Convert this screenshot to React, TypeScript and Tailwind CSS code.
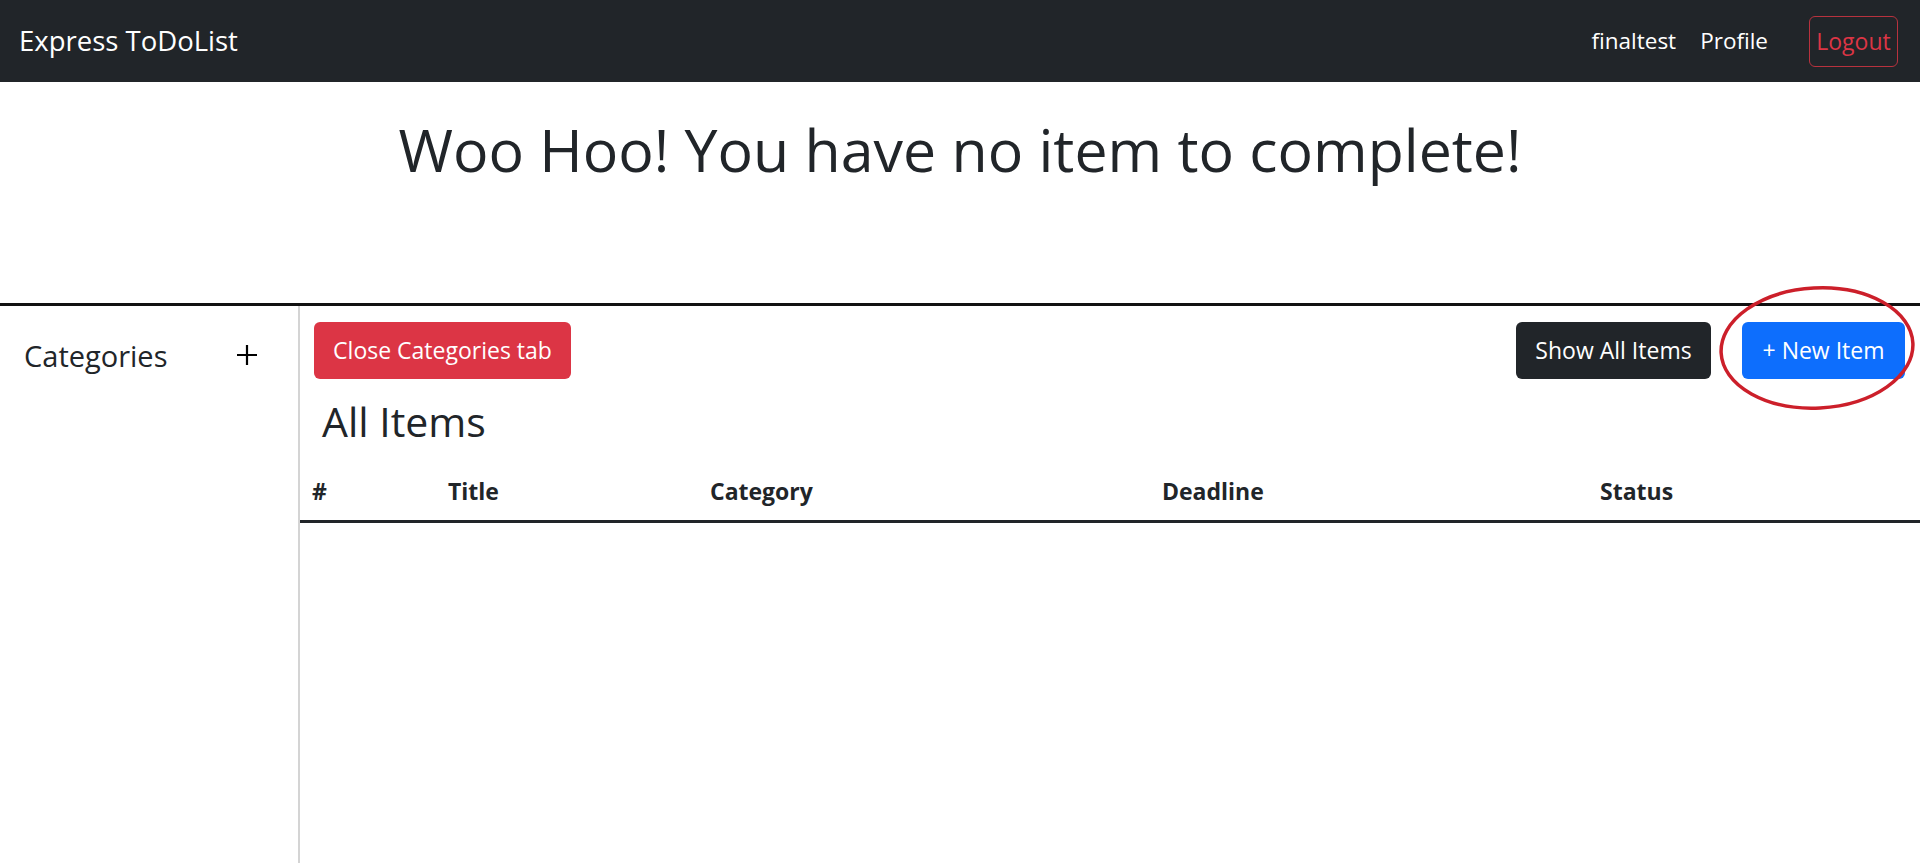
import React from "react";

const columns = [
  { label: "#", width: "w-[136px]" },
  { label: "Title", width: "w-[262px]" },
  { label: "Category", width: "w-[452px]" },
  { label: "Deadline", width: "w-[438px]" },
  { label: "Status", width: "" },
];

function Navbar() {
  return (
    <nav className="flex h-[82px] items-center justify-between bg-[#212529] pl-[19px] pr-[22px]">
      <a className="text-[27.5px] leading-none text-white">Express ToDoList</a>
      <div className="flex items-center">
        <a className="px-3 text-[22.5px] text-white">finaltest</a>
        <a className="px-3 text-[22.5px] text-white">Profile</a>
        <button className="ml-[29px] flex h-[51px] w-[89px] items-center justify-center rounded-[6px] border border-[#b8323e] text-[23px] text-[#dc3545]">
          Logout
        </button>
      </div>
    </nav>
  );
}

function Sidebar() {
  return (
    <aside className="w-[300px] shrink-0 border-r-2 border-[#d4d4d4]">
      <div className="mt-[20px] flex h-[58px] items-center justify-between pl-[24px] pr-[40px]">
        <h5 className="text-[29px] leading-none">Categories</h5>
        <svg width="22" height="22" viewBox="0 0 22 22" className="text-black">
          <path d="M11 1v20M1 11h20" stroke="currentColor" strokeWidth="2.2" />
        </svg>
      </div>
    </aside>
  );
}

function ItemsPanel() {
  return (
    <main className="relative flex-1">
      <div className="flex items-center justify-between pl-[14px] pr-[15px] pt-[16px]">
        <button className="h-[57px] w-[257px] rounded-[6px] bg-[#dc3545] text-[23px] text-white">
          Close Categories tab
        </button>
        <div className="flex items-center gap-[31px]">
          <button className="h-[57px] w-[195px] rounded-[6px] bg-[#212529] text-[23px] text-white">
            Show All Items
          </button>
          <button className="h-[57px] w-[163px] rounded-[6px] bg-[#0d6efd] text-[23px] text-white">
            + New Item
          </button>
        </div>
      </div>

      {/* hand-drawn annotation round the new item button */}
      <svg
        className="pointer-events-none absolute right-[2px] top-[-22px]"
        width="200"
        height="128"
        viewBox="0 0 200 128"
      >
        <ellipse
          cx="99"
          cy="64"
          rx="96"
          ry="60"
          fill="none"
          stroke="#cc1f2a"
          strokeWidth="3.5"
          transform="rotate(-3 99 64)"
        />
      </svg>

      <h3 className="pl-[22px] pt-[18px] text-[41px] leading-[1.2]">All Items</h3>

      <table className="mt-[25px] w-full border-collapse text-left">
        <thead>
          <tr className="border-b-[3px] border-[#212529]">
            {columns.map((c) => (
              <th
                key={c.label}
                className={`${c.width} px-[12px] pb-[14px] pt-[6px] text-[23px] font-bold leading-tight`}
              >
                {c.label}
              </th>
            ))}
          </tr>
        </thead>
        <tbody></tbody>
      </table>
    </main>
  );
}

export default function App() {
  return (
    <div className="flex h-screen flex-col bg-white font-['Open_Sans',sans-serif] text-[#212529]">
      <Navbar />
      <div className="flex h-[221px] shrink-0 items-start justify-center pt-[32px]">
        <h1 className="text-[59px] leading-[1.2]">Woo Hoo! You have no item to complete!</h1>
      </div>
      <div className="h-[3px] shrink-0 bg-[#111]" />
      <div className="flex flex-1">
        <Sidebar />
        <ItemsPanel />
      </div>
    </div>
  );
}
